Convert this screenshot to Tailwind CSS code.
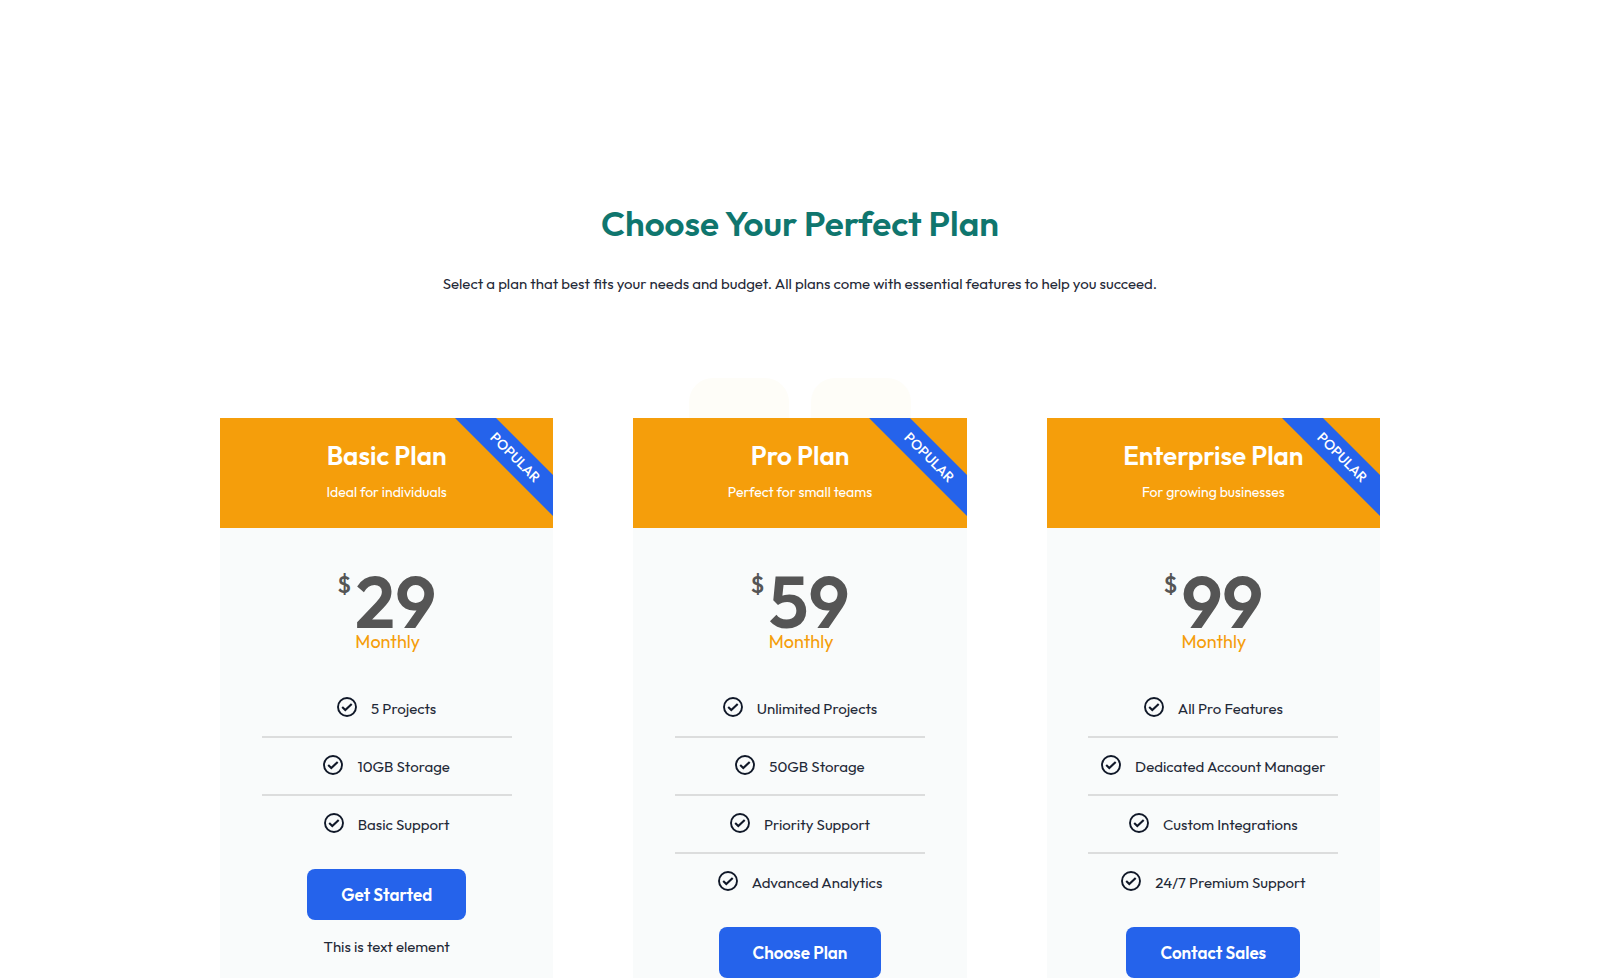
<!DOCTYPE html>
<html lang="en">
<head>
  <meta charset="UTF-8" />
  <meta name="viewport" content="width=device-width, initial-scale=1.0"/>
  <title>Choose Your Perfect Plan</title>
  <script src="https://cdn.jsdelivr.net/npm/@tailwindcss/browser@4"></script>
</head>
<body class="bg-white text-[#1f2937] font-['Outfit','Lato',sans-serif] overflow-x-hidden">

  <!-- Icon sprite -->
  <svg class="hidden">
    <symbol id="check" viewBox="0 0 20 20">
      <circle cx="10" cy="10" r="9" fill="none" stroke="currentColor" stroke-width="1.9"/>
      <path d="M5.2 10l3.1 3 6.4-6.1" fill="none" stroke="currentColor" stroke-width="2.1"/>
    </symbol>
  </svg>

  <section class="max-w-[1160px] mx-auto pt-[198px] text-[15px] leading-6">
    <h1 class="text-[35px] leading-[50px] font-semibold text-center text-[#0f766e]">Choose Your Perfect Plan</h1>
    <p class="mt-6 text-center">Select a plan that best fits your needs and budget. All plans come with essential features to help you succeed.</p>

    <!-- Plans -->
    <div class="relative mt-[122px] grid grid-cols-3 gap-20 items-stretch">

      <!-- Decorative blocks behind the cards -->
      <div class="absolute -top-10 inset-x-0 flex justify-center gap-[22px]" aria-hidden="true">
        <div class="size-[100px] rounded-3xl bg-[#fefdf8]"></div>
        <div class="size-[100px] rounded-3xl bg-[#fefdf8]"></div>
      </div>

      <!-- Basic -->
      <article class="relative overflow-hidden bg-[#f9fbfb] text-center pb-8">
        <header class="bg-[#f59e0b] text-white h-[110px] pt-5">
          <h2 class="text-[26px] leading-9 font-semibold">Basic Plan</h2>
          <p class="mt-1 text-sm leading-7">Ideal for individuals</p>
        </header>
        <span class="absolute top-[25px] -right-[42px] w-40 h-[29px] rotate-45 bg-[#2563eb] text-white text-sm leading-[29px] font-medium">POPULAR</span>
        <div class="mt-[42px] flex justify-center gap-1 text-[#555]">
          <span class="text-2xl leading-7 font-medium">$</span>
          <div class="text-left">
            <div class="text-[72px] leading-16 font-semibold">29</div>
            <div class="text-lg leading-4 font-normal text-[#f59e0b]">Monthly</div>
          </div>
        </div>
        <ul class="mt-[38px] w-[250px] mx-auto divide-y-2 divide-[#dcdddd]">
          <li class="flex items-start justify-center gap-[14px] h-[50px] pt-[9px]"><svg class="size-5 text-gray-900"><use href="#check"/></svg><span>5 Projects</span></li>
          <li class="flex items-start justify-center gap-[14px] h-[58px] pt-[17px]"><svg class="size-5 text-gray-900"><use href="#check"/></svg><span>10GB Storage</span></li>
          <li class="flex items-start justify-center gap-[14px] h-[58px] pt-[17px]"><svg class="size-5 text-gray-900"><use href="#check"/></svg><span>Basic Support</span></li>
        </ul>
        <button class="mt-[15px] h-[51px] px-[34px] rounded-lg bg-[#2563eb] text-white text-[17px] font-semibold hover:bg-blue-700">Get Started</button>
        <p class="mt-[15px]">This is text element</p>
      </article>

      <!-- Pro -->
      <article class="relative overflow-hidden bg-[#f9fbfb] text-center pb-8">
        <header class="bg-[#f59e0b] text-white h-[110px] pt-5">
          <h2 class="text-[26px] leading-9 font-semibold">Pro Plan</h2>
          <p class="mt-1 text-sm leading-7">Perfect for small teams</p>
        </header>
        <span class="absolute top-[25px] -right-[42px] w-40 h-[29px] rotate-45 bg-[#2563eb] text-white text-sm leading-[29px] font-medium">POPULAR</span>
        <div class="mt-[42px] flex justify-center gap-1 text-[#555]">
          <span class="text-2xl leading-7 font-medium">$</span>
          <div class="text-left">
            <div class="text-[72px] leading-16 font-semibold">59</div>
            <div class="text-lg leading-4 font-normal text-[#f59e0b]">Monthly</div>
          </div>
        </div>
        <ul class="mt-[38px] w-[250px] mx-auto divide-y-2 divide-[#dcdddd]">
          <li class="flex items-start justify-center gap-[14px] h-[50px] pt-[9px]"><svg class="size-5 text-gray-900"><use href="#check"/></svg><span>Unlimited Projects</span></li>
          <li class="flex items-start justify-center gap-[14px] h-[58px] pt-[17px]"><svg class="size-5 text-gray-900"><use href="#check"/></svg><span>50GB Storage</span></li>
          <li class="flex items-start justify-center gap-[14px] h-[58px] pt-[17px]"><svg class="size-5 text-gray-900"><use href="#check"/></svg><span>Priority Support</span></li>
          <li class="flex items-start justify-center gap-[14px] h-[58px] pt-[17px]"><svg class="size-5 text-gray-900"><use href="#check"/></svg><span>Advanced Analytics</span></li>
        </ul>
        <button class="mt-[15px] h-[51px] px-[34px] rounded-lg bg-[#2563eb] text-white text-[17px] font-semibold hover:bg-blue-700">Choose Plan</button>
      </article>

      <!-- Enterprise -->
      <article class="relative overflow-hidden bg-[#f9fbfb] text-center pb-8">
        <header class="bg-[#f59e0b] text-white h-[110px] pt-5">
          <h2 class="text-[26px] leading-9 font-semibold">Enterprise Plan</h2>
          <p class="mt-1 text-sm leading-7">For growing businesses</p>
        </header>
        <span class="absolute top-[25px] -right-[42px] w-40 h-[29px] rotate-45 bg-[#2563eb] text-white text-sm leading-[29px] font-medium">POPULAR</span>
        <div class="mt-[42px] flex justify-center gap-1 text-[#555]">
          <span class="text-2xl leading-7 font-medium">$</span>
          <div class="text-left">
            <div class="text-[72px] leading-16 font-semibold">99</div>
            <div class="text-lg leading-4 font-normal text-[#f59e0b]">Monthly</div>
          </div>
        </div>
        <ul class="mt-[38px] w-[250px] mx-auto divide-y-2 divide-[#dcdddd]">
          <li class="flex items-start justify-center gap-[14px] h-[50px] pt-[9px]"><svg class="size-5 text-gray-900"><use href="#check"/></svg><span>All Pro Features</span></li>
          <li class="flex items-start justify-center gap-[14px] h-[58px] pt-[17px]"><svg class="size-5 text-gray-900"><use href="#check"/></svg><span>Dedicated Account Manager</span></li>
          <li class="flex items-start justify-center gap-[14px] h-[58px] pt-[17px]"><svg class="size-5 text-gray-900"><use href="#check"/></svg><span>Custom Integrations</span></li>
          <li class="flex items-start justify-center gap-[14px] h-[58px] pt-[17px]"><svg class="size-5 text-gray-900"><use href="#check"/></svg><span>24/7 Premium Support</span></li>
        </ul>
        <button class="mt-[15px] h-[51px] px-[34px] rounded-lg bg-[#2563eb] text-white text-[17px] font-semibold hover:bg-blue-700">Contact Sales</button>
      </article>

    </div>
  </section>
</body>
</html>
